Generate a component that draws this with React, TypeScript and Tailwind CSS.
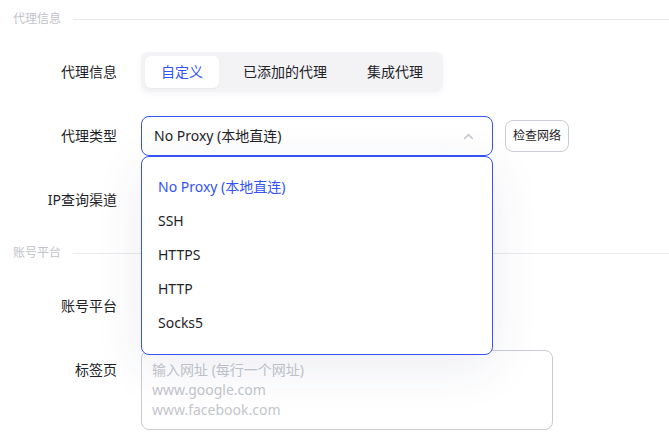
import { ChevronUp } from "lucide-react";

const font = { fontFamily: '"Noto Sans", "Noto Sans CJK SC", sans-serif' };

function SectionTitle({ title }: { title: string }) {
  return (
    <div className="flex h-[18px] items-center gap-3">
      <span className="text-xs text-[#c2c3ca]">{title}</span>
      <div className="h-px flex-1 bg-[#e8e9ee]" />
    </div>
  );
}

function Row({ label, children }: { label: string; children: React.ReactNode }) {
  return (
    <div className="flex items-start gap-6">
      <div className="flex h-10 w-[104px] shrink-0 items-center justify-end text-sm text-[#1f2329]">{label}</div>
      {children}
    </div>
  );
}

const options = ["No Proxy (本地直连)", "SSH", "HTTPS", "HTTP", "Socks5"];

export default function App() {
  return (
    <div className="h-[441px] w-[669px] overflow-hidden bg-white pl-[13px] pt-[10px]" style={font}>
      <div className="flex flex-col gap-6">
        <SectionTitle title="代理信息" />
        <Row label="代理信息">
          <div className="flex h-10 w-[302px] items-center gap-2 rounded-lg bg-[#f3f3f5] p-1 text-sm shadow-[0_2px_6px_rgba(40,50,110,0.05)]">
            <div className="flex h-8 items-center rounded-md bg-white px-4 text-[#3553f6] shadow-[0_1px_2px_rgba(0,0,0,0.04)]">自定义</div>
            <div className="flex h-8 items-center px-4 text-[#1f2329]">已添加的代理</div>
            <div className="flex h-8 items-center px-4 text-[#1f2329]">集成代理</div>
          </div>
        </Row>
        <Row label="代理类型">
          <div className="relative z-10 flex items-center gap-3">
            <div className="flex h-10 w-[352px] items-center justify-between rounded-lg border border-[#3553f6] bg-white pl-3 pr-4 text-sm text-[#1f2329]">
              <span>No Proxy (本地直连)</span>
              <ChevronUp size={15} strokeWidth={2.6} className="text-[#c9cbd2]" />
            </div>
            <button type="button" className="h-8 w-16 rounded-lg border border-[#c9cbd2] bg-white text-xs text-[#1f2329]">检查网络</button>
            <div className="absolute left-0 top-10 w-[352px] rounded-lg border border-[#3553f6] bg-white pb-[14px] pt-[13px] shadow-[0_12px_50px_rgba(40,50,110,0.09)]">
              {options.map((o, i) => (
                <div key={o} className={`flex h-[34px] items-center pl-4 text-sm ${i === 0 ? "text-[#3553f6]" : "text-[#1f2329]"}`}>{o}</div>
              ))}
            </div>
          </div>
        </Row>
        <Row label="IP查询渠道">
          <div className="h-10 w-[352px] rounded-lg border border-[#c9cbd2]" />
        </Row>
        <SectionTitle title="账号平台" />
        <Row label="账号平台">
          <div className="h-10 w-[352px] rounded-lg border border-[#c9cbd2]" />
        </Row>
        <Row label="标签页">
          <div className="h-20 w-[412px] rounded-lg border border-[#c9cbd2] px-[10px] pt-[9px] text-sm leading-5 text-[#c4c6cd]">
            <div>输入网址 (每行一个网址)</div>
            <div>www.google.com</div>
            <div>www.facebook.com</div>
          </div>
        </Row>
      </div>
    </div>
  );
}
